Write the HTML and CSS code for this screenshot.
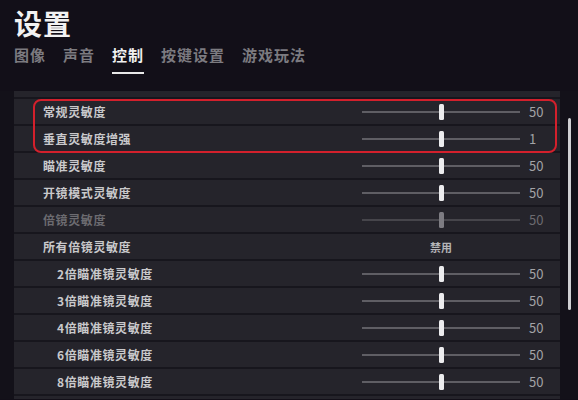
FILE: index.html
```html
<!DOCTYPE html>
<html lang="zh-CN">
<head>
    <meta charset="UTF-8">
    <title>设置</title>
    <link rel="stylesheet" href="styles.css">
</head>
<body>

<div class="header">
    <h1 class="title">设置</h1>
    <div class="tabs">
        <span class="tab">图像</span>
        <span class="tab">声音</span>
        <span class="tab active">控制</span>
        <span class="tab">按键设置</span>
        <span class="tab">游戏玩法</span>
    </div>
</div>

<div class="panel">
    <div class="list">
        <div class="row partial"></div>

        <div class="row">
            <span class="label">常规灵敏度</span>
            <div class="slider"><div class="track"></div><div class="thumb"></div></div>
            <span class="value">50</span>
        </div>
        <div class="row">
            <span class="label">垂直灵敏度增强</span>
            <div class="slider"><div class="track"></div><div class="thumb"></div></div>
            <span class="value">1</span>
        </div>
        <div class="row">
            <span class="label">瞄准灵敏度</span>
            <div class="slider"><div class="track"></div><div class="thumb"></div></div>
            <span class="value">50</span>
        </div>
        <div class="row">
            <span class="label">开镜模式灵敏度</span>
            <div class="slider"><div class="track"></div><div class="thumb"></div></div>
            <span class="value">50</span>
        </div>
        <div class="row disabled">
            <span class="label">倍镜灵敏度</span>
            <div class="slider"><div class="track"></div><div class="thumb"></div></div>
            <span class="value">50</span>
        </div>
        <div class="row">
            <span class="label">所有倍镜灵敏度</span>
            <span class="option">禁用</span>
        </div>
        <div class="row sub">
            <span class="label">2倍瞄准镜灵敏度</span>
            <div class="slider"><div class="track"></div><div class="thumb"></div></div>
            <span class="value">50</span>
        </div>
        <div class="row sub">
            <span class="label">3倍瞄准镜灵敏度</span>
            <div class="slider"><div class="track"></div><div class="thumb"></div></div>
            <span class="value">50</span>
        </div>
        <div class="row sub">
            <span class="label">4倍瞄准镜灵敏度</span>
            <div class="slider"><div class="track"></div><div class="thumb"></div></div>
            <span class="value">50</span>
        </div>
        <div class="row sub">
            <span class="label">6倍瞄准镜灵敏度</span>
            <div class="slider"><div class="track"></div><div class="thumb"></div></div>
            <span class="value">50</span>
        </div>
        <div class="row sub">
            <span class="label">8倍瞄准镜灵敏度</span>
            <div class="slider"><div class="track"></div><div class="thumb"></div></div>
            <span class="value">50</span>
        </div>
        <div class="row"></div>

        <div class="highlight"></div>
    </div>

    <div class="scrollbar"><div class="scroll-thumb"></div></div>
</div>

</body>
</html>
```

FILE: styles.css
```css
body {
    margin: 0;
    background-color: #120f18;
    font-family: "Noto Sans CJK SC", "Noto Sans", sans-serif;
    overflow: hidden;
    height: 400px;
}

.header {
    padding: 6px 14px 0 14px;
}

.title {
    margin: 0;
    font-size: 28px;
    font-weight: 700;
    line-height: 34px;
    color: #f2f2f2;
    letter-spacing: 1px;
}

.tabs {
    display: flex;
    gap: 17px;
    margin-top: 4px;
}

.tab {
    font-size: 15px;
    line-height: 22px;
    font-weight: 700;
    letter-spacing: 1px;
    color: #7c7b80;
    padding-bottom: 6px;
    border-bottom: 2px solid transparent;
}

.tab.active {
    color: #f0f0f0;
    border-bottom-color: #e8e8e8;
}

.panel {
    display: flex;
    height: 308px;
    overflow: hidden;
    margin-top: 17px;
    padding-left: 14px;
    background-color: #131119;
}

.list {
    position: relative;
    width: 546px;
    display: flex;
    flex-direction: column;
    gap: 2px;
    background-color: #17161d;
}

.row {
    display: flex;
    flex-shrink: 0;
    align-items: center;
    height: 25px;
    padding: 0 9px 0 29px;
    background-color: #25242b;
}

.row.partial {
    height: 6px;
}

.row.sub {
    padding-left: 43px;
}

.label {
    font-size: 12px;
    font-weight: 700;
    letter-spacing: 0.6px;
    color: #c9c9cb;
}

.slider {
    position: relative;
    width: 158px;
    height: 16px;
    margin-left: auto;
}

.track {
    position: absolute;
    left: 0;
    right: 0;
    top: 7px;
    height: 2px;
    background-color: #5f5e64;
}

.thumb {
    position: absolute;
    left: 77px;
    top: 0;
    width: 5px;
    height: 16px;
    border-radius: 1.5px;
    background-color: #ececee;
}

.value {
    width: 22px;
    margin-left: 9px;
    font-size: 13px;
    color: #a3a3a6;
}

.option {
    width: 158px;
    margin-left: auto;
    margin-right: 31px;
    text-align: center;
    font-size: 11px;
    font-weight: 700;
    color: #b4b4b7;
}

.row.disabled .label,
.row.disabled .value {
    color: #6c6b70;
}

.row.disabled .thumb {
    background-color: #7d7c82;
}

.row.disabled .track {
    background-color: #46454b;
}

.highlight {
    position: absolute;
    left: 19px;
    top: 8px;
    width: 520px;
    height: 50px;
    border: 2px solid #d3202c;
    border-radius: 8px;
}

.scrollbar {
    width: 18px;
    display: flex;
    justify-content: center;
}

.scroll-thumb {
    margin-top: 27px;
    width: 3px;
    height: 192px;
    border-radius: 2px;
    background-color: #cfcfd2;
}
```
